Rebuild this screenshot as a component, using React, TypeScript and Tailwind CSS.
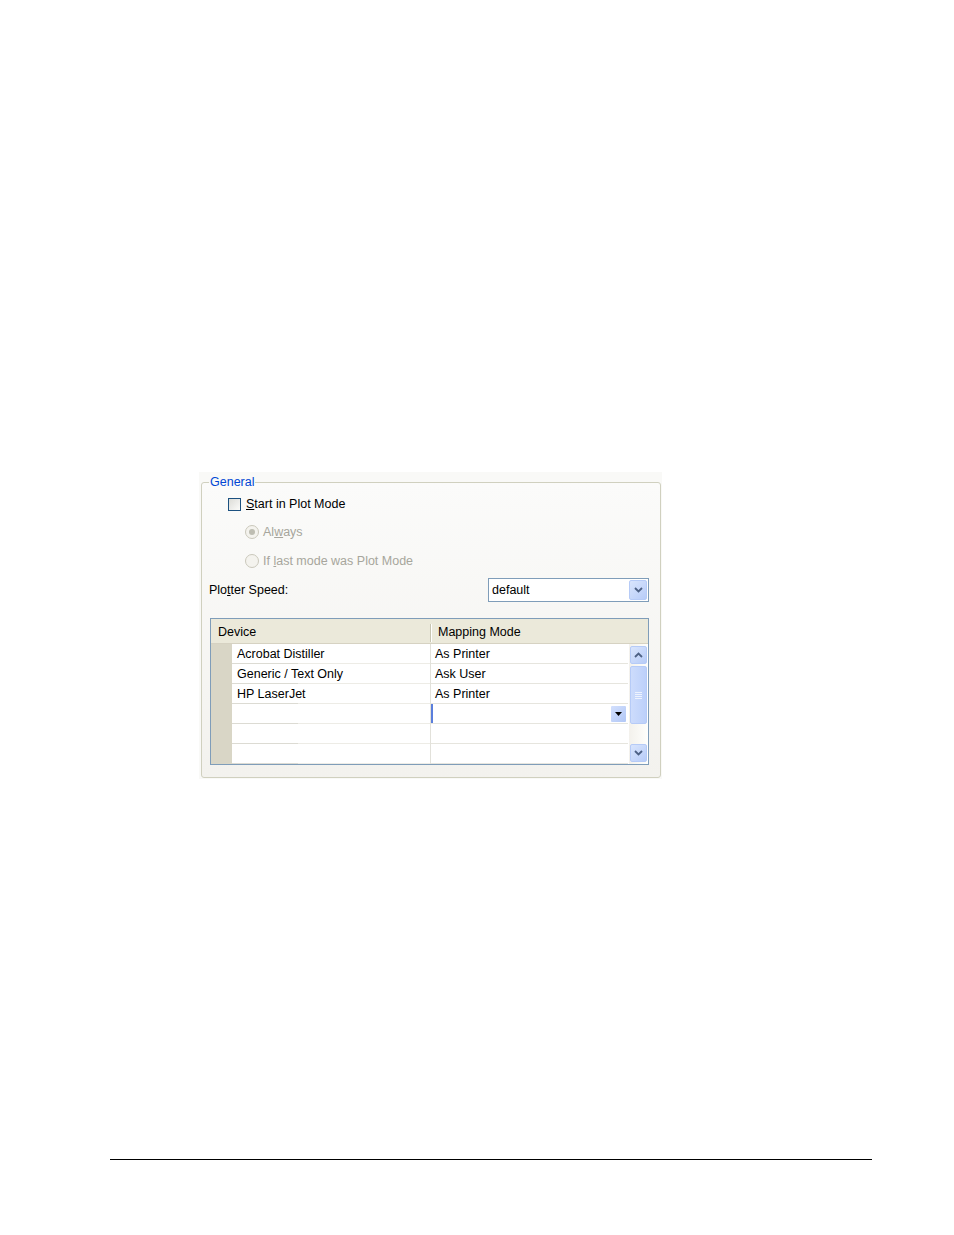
import React from "react";

const font = { fontFamily: '"Liberation Sans", Arial, sans-serif' };

function Chevron({ down = true, className = "" }: { down?: boolean; className?: string }) {
  return (
    <svg width="9" height="6" viewBox="0 0 9 6" className={className}>
      <path
        d={down ? "M1 1 L4.5 4.5 L8 1" : "M1 5 L4.5 1.5 L8 5"}
        fill="none"
        stroke="#4d6185"
        strokeWidth="1.8"
      />
    </svg>
  );
}

function ScrollButton({ down }: { down?: boolean }) {
  return (
    <div className="flex h-[18px] w-[17px] items-center justify-center rounded-[2px] border border-[#b6cbf7] bg-[linear-gradient(135deg,#d9e5fd,#b7ccf8)]">
      <Chevron down={down} />
    </div>
  );
}

const rows = [
  ["Acrobat Distiller", "As Printer"],
  ["Generic / Text Only", "Ask User"],
  ["HP LaserJet", "As Printer"],
  ["", ""],
  ["", ""],
  ["", ""],
];

function Row({ device, mode, index }: { device: string; mode: string; index: number }) {
  const editing = index === 3;
  return (
    <div className="flex h-[20px]">
      <div className="w-[21px] bg-[#d9d6c6]" />
      <div className="flex w-[198px] flex-col bg-white">
        <div className="flex h-[19px] items-center pl-[5px] pt-[1px] text-[12.5px] text-black">{device}</div>
        <div className="flex h-px">
          <div className="w-[66px] bg-[#dcdbd3]" />
          <div className="flex-1 bg-[#edece6]" />
        </div>
      </div>
      <div className="w-px bg-[#e2e1da]" />
      <div className="flex w-[197px] flex-col bg-white">
        <div className="flex h-[19px] items-center">
          {editing ? (
            <>
              <div className="h-[19px] w-[2px] bg-[#5a7edc]" />
              <div className="flex-1" />
              <div className="mr-[2px] flex h-[16px] w-[15px] items-center justify-center rounded-[1px] bg-[linear-gradient(135deg,#d3e0fd,#b1c7f6)]">
                <svg width="7" height="4" viewBox="0 0 7 4">
                  <path d="M0 0 H7 L3.5 4 Z" fill="#000" />
                </svg>
              </div>
            </>
          ) : (
            <span className="pl-[4px] pt-[1px] text-[12.5px] text-black">{mode}</span>
          )}
        </div>
        <div className="h-px bg-[#e6e5de]" />
      </div>
    </div>
  );
}

export default function App() {
  return (
    <div className="h-[1235px] w-[954px] bg-white pt-[472px]" style={font}>
      <div className="ml-[199px] h-[307px] w-[463px] bg-[#f9f9f7] pt-[3px]">
        <fieldset className="ml-[2px] w-[460px] rounded-[3px] border border-[#d0d0bf] bg-[linear-gradient(180deg,#fbfbfa,#f3f2ee)] pb-[12px]">
          <legend className="ml-[7px] px-[1px] text-[12.5px] leading-[14px] text-[#0046d5]">General</legend>

          <div className="ml-[26px] mt-[7px] flex h-[16px] items-center gap-[5px]">
            <div className="h-[13px] w-[13px] border border-[#1c5180] bg-[linear-gradient(135deg,#dcdcd7,#fbfbf9)]" />
            <span className="text-[12.5px] text-black">
              <u>S</u>tart in Plot Mode
            </span>
          </div>

          <div className="ml-[43px] mt-[12px] flex h-[16px] items-center gap-[4px]">
            <div className="flex h-[14px] w-[14px] items-center justify-center rounded-full border border-[#cac8bb] bg-[#f4f3ee]">
              <div className="h-[6px] w-[6px] rounded-full bg-[#bebdb2]" />
            </div>
            <span className="text-[12.5px] text-[#a7a69c]">
              Al<u>w</u>ays
            </span>
          </div>

          <div className="ml-[43px] mt-[13px] flex h-[16px] items-center gap-[4px]">
            <div className="h-[14px] w-[14px] rounded-full border border-[#cac8bb] bg-[#f4f3ee]" />
            <span className="text-[12.5px] text-[#a7a69c]">
              If <u>l</u>ast mode was Plot Mode
            </span>
          </div>

          <div className="mt-[9px] flex h-[24px] items-center">
            <span className="ml-[7px] text-[12.5px] text-black">
              Plo<u>t</u>ter Speed:
            </span>
            <div className="ml-auto mr-[11px] flex h-[24px] w-[161px] items-center border border-[#7f9db9] bg-white pl-[3px] pr-px">
              <span className="flex-1 text-[12.5px] text-black">default</span>
              <div className="flex h-[20px] w-[18px] items-center justify-center rounded-[2px] border border-[#b6cbf7] bg-[linear-gradient(135deg,#d9e5fd,#b7ccf8)]">
                <Chevron />
              </div>
            </div>
          </div>

          <div className="ml-[8px] mt-[16px] w-[439px] border border-[#7f9db9] bg-white">
            <div className="flex h-[25px] items-center border-b border-[#d6d2c2] bg-[#ebe9da] pt-[3px]">
              <div className="w-[219px] pl-[7px] text-[12.5px] text-black">Device</div>
              <div className="h-[18px] w-px bg-[#c7c5b2]" />
              <div className="h-[18px] w-px bg-white" />
              <div className="pl-[6px] text-[12.5px] text-black">Mapping Mode</div>
            </div>
            <div className="flex">
              <div className="flex flex-col">
                {rows.map((r, i) => (
                  <Row key={i} device={r[0]} mode={r[1]} index={i} />
                ))}
              </div>
              <div className="ml-px flex w-[18px] flex-col items-center bg-[linear-gradient(90deg,#f3f1ec,#fefefb)] py-[2px]">
                <ScrollButton down={false} />
                <div className="mt-[2px] flex h-[58px] w-[17px] items-center justify-center rounded-[2px] border border-[#b6cbf7] bg-[linear-gradient(90deg,#cddcfc,#bcd0fa)]">
                  <div className="flex flex-col gap-[1px]">
                    <div className="h-px w-[7px] bg-[#eef3fe]" />
                    <div className="h-px w-[7px] bg-[#eef3fe]" />
                    <div className="h-px w-[7px] bg-[#eef3fe]" />
                    <div className="h-px w-[7px] bg-[#eef3fe]" />
                  </div>
                </div>
                <div className="flex-1" />
                <ScrollButton down />
              </div>
            </div>
          </div>
        </fieldset>
      </div>

      <div className="ml-[110px] mt-[380px] h-px w-[762px] bg-black" />
    </div>
  );
}
